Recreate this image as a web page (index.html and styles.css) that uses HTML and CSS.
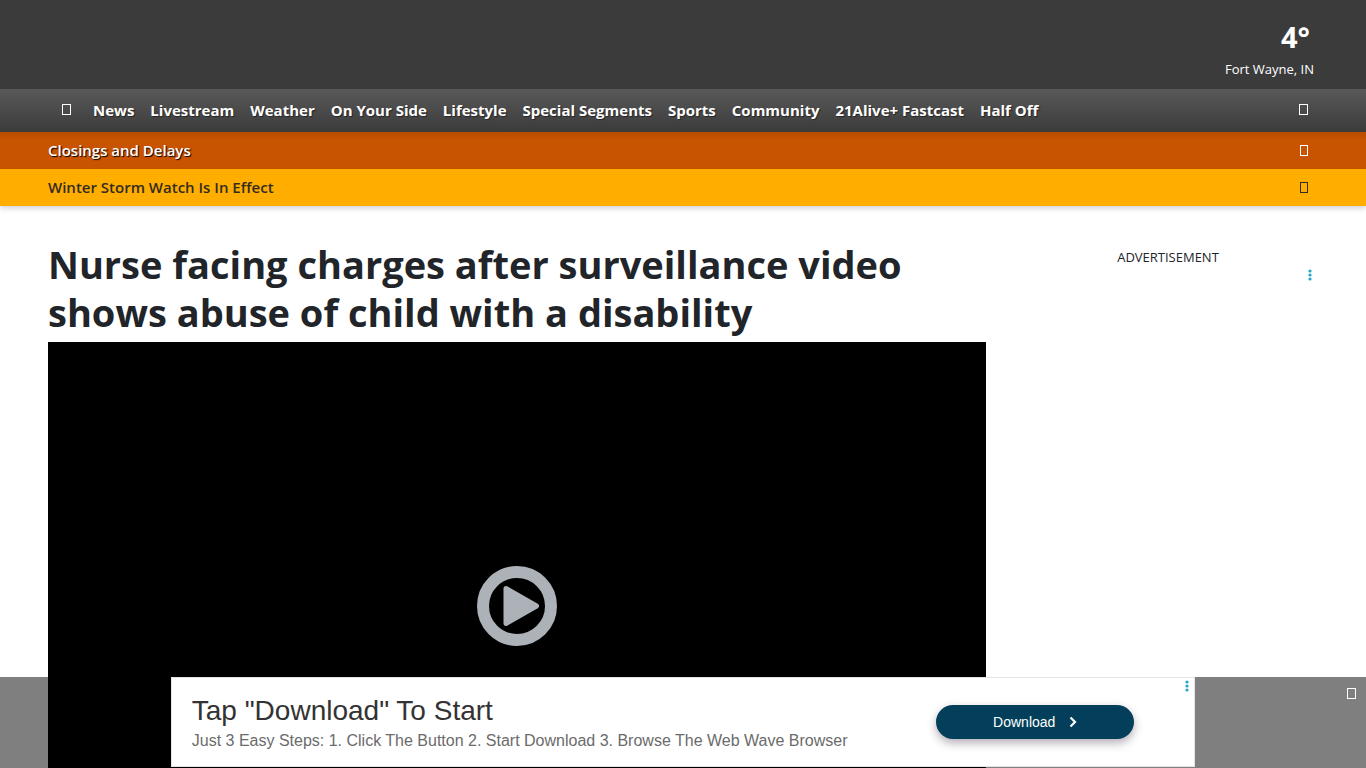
FILE: index.html
```html
<!DOCTYPE html>
<html lang="en">
<head>
<meta charset="utf-8">
<meta name="viewport" content="width=device-width, initial-scale=1">
<title>Nurse facing charges after surveillance video shows abuse of child with a disability</title>
<link rel="stylesheet" href="styles.css">
</head>
<body>
<header class="site-header">
  <div class="masthead">
    <a class="weather" href="#">
      <span class="weather-temp">4°</span>
      <span class="weather-place">Fort Wayne, IN</span>
    </a>
  </div>
  <nav class="nav" aria-label="Main">
    <a class="nav-home" href="#" aria-label="Home"><span class="glyph"></span></a>
    <ul class="nav-list">
      <li><a href="#">News</a></li>
      <li><a href="#">Livestream</a></li>
      <li><a href="#">Weather</a></li>
      <li><a href="#">On Your Side</a></li>
      <li><a href="#">Lifestyle</a></li>
      <li><a href="#">Special Segments</a></li>
      <li><a href="#">Sports</a></li>
      <li><a href="#">Community</a></li>
      <li><a href="#">21Alive+ Fastcast</a></li>
      <li><a href="#">Half Off</a></li>
    </ul>
    <button class="icon-button nav-search" type="button" aria-label="Search"><span class="glyph"></span></button>
  </nav>
  <div class="alerts">
    <a class="alert alert-closings" href="#"><span>Closings and Delays</span><span class="glyph glyph-small"></span></a>
    <a class="alert alert-weather" href="#"><span>Winter Storm Watch Is In Effect</span><span class="glyph glyph-small"></span></a>
  </div>
</header>
<main class="page">
  <article class="story">
    <h1 class="headline">Nurse facing charges after surveillance video shows abuse of child with a disability</h1>
    <div class="video">
      <button class="play" type="button" aria-label="Play video">
        <svg viewBox="0 0 80 80" width="80" height="80" aria-hidden="true">
          <circle cx="40" cy="40" r="34" fill="none" stroke="#adb1b8" stroke-width="12"/>
          <path d="M29 22.500 L59.500 40 L29 57.500 Z" fill="#adb1b8" stroke="#adb1b8" stroke-width="5" stroke-linejoin="round"/>
        </svg>
      </button>
    </div>
  </article>
  <aside class="rail">
    <p class="rail-label">ADVERTISEMENT</p>
    <button class="icon-button ad-menu" type="button" aria-label="Ad options">
      <svg viewBox="0 0 4 12" width="4" height="12" aria-hidden="true"><g fill="#26a5c4"><circle cx="2" cy="2" r="1.600"/><circle cx="2" cy="6" r="1.600"/><circle cx="2" cy="10" r="1.600"/></g></svg>
    </button>
  </aside>
</main>
<aside class="sticky-ad">
  <div class="banner">
    <div class="banner-copy">
      <h2 class="banner-title">Tap "Download" To Start</h2>
      <p class="banner-text">Just 3 Easy Steps: 1. Click The Button 2. Start Download 3. Browse The Web Wave Browser</p>
    </div>
    <button class="download" type="button">Download
      <svg viewBox="0 0 8 12" width="8" height="12" aria-hidden="true"><path d="M1.500 1.500 L6 6 L1.500 10.500" fill="none" stroke="#fff" stroke-width="2.200"/></svg>
    </button>
    <button class="icon-button banner-menu" type="button" aria-label="Ad options">
      <svg viewBox="0 0 4 12" width="4" height="12" aria-hidden="true"><g fill="#26a5c4"><circle cx="2" cy="2" r="1.600"/><circle cx="2" cy="6" r="1.600"/><circle cx="2" cy="10" r="1.600"/></g></svg>
    </button>
  </div>
  <button class="icon-button sticky-close" type="button" aria-label="Close"><span class="glyph"></span></button>
</aside>
</body>
</html>
```
FILE: styles.css
```css
* { box-sizing: border-box; }
body {
  margin: 0;
  background: #fff;
  color: #212529;
  font-family: "Segoe UI", "Open Sans", "Noto Sans", sans-serif;
  font-size: 15px;
  line-height: 24px;
}
a { color: inherit; text-decoration: none; }
button { font: inherit; cursor: pointer; }
h1, h2, p, ul { margin: 0; padding: 0; }

.glyph { display: block; width: 9px; height: 11px; border: 1px solid currentColor; }
.glyph-small { width: 8px; height: 11px; }
.icon-button { display: block; padding: 0; border: 0; background: none; line-height: 0; }

.site-header { box-shadow: 0 2px 6px rgba(0, 0, 0, 0.2); }
.masthead {
  display: flex;
  justify-content: flex-end;
  padding: 18px 52px 8px;
  background: #3b3b3b;
  color: #fff;
}
.weather { display: flex; flex-direction: column; align-items: flex-end; }
.weather-temp { padding: 0 4px 2px 0; font-size: 29px; font-weight: 700; line-height: 37px; }
.weather-place { font-size: 13px; }

.nav {
  display: flex;
  align-items: center;
  padding: 0 58px 2px 62px;
  min-height: 43px;
  background: linear-gradient(#595959, #3b3b3b);
  color: #fff;
  font-weight: 700;
  text-shadow: 1px 1px 1px rgba(0, 0, 0, 0.5);
}
.nav-list { display: flex; gap: 16px; margin-left: 22px; list-style: none; white-space: nowrap; }
.nav-search { margin-left: auto; color: #fff; }

.alert {
  display: flex;
  align-items: center;
  justify-content: space-between;
  padding: 6px 58px 7px 48px;
  font-weight: 600;
}
.alert-closings {
  background: linear-gradient(#b84c00, #c85300 8px);
  color: #fff;
  text-shadow: 1px 1px 1px #000;
}
.alert-weather { background: #ffae00; color: #332b20; }

.page {
  display: grid;
  grid-template-columns: minmax(0, 1fr) 300px;
  gap: 32px;
  padding: 34px 48px 0;
}
.headline { margin-bottom: 6px; font-size: 38px; font-weight: 700; line-height: 48px; }
.video { display: grid; place-items: center; aspect-ratio: 16 / 9; background: #000; }
.play { display: block; padding: 0; border: 0; background: none; line-height: 0; }
.rail-label { padding-top: 5px; font-size: 13px; text-align: center; }
.ad-menu { margin: 0 6px 0 auto; }

.sticky-ad {
  position: fixed;
  right: 0;
  bottom: 0;
  left: 0;
  display: flex;
  justify-content: center;
  padding-bottom: 1px;
  background: rgba(0, 0, 0, 0.5);
}
.banner {
  position: relative;
  display: flex;
  align-items: center;
  justify-content: space-between;
  width: 75%;
  height: 90px;
  padding: 0 60px 0 20px;
  border: 1px solid #e4e4e4;
  background: #fff;
  font-family: Arial, "Liberation Sans", sans-serif;
}
.banner-copy { padding-top: 2px; }
.banner-title { color: #333; font-size: 28px; font-weight: 400; line-height: 36px; }
.banner-text { color: #6b6b6b; font-size: 16px; }
.download {
  display: flex;
  align-items: center;
  justify-content: center;
  gap: 14px;
  width: 198px;
  height: 34px;
  border: 0;
  border-radius: 17px;
  background: #033f5b;
  box-shadow: 0 4px 10px rgba(40, 20, 50, 0.35);
  color: #fff;
  font-size: 14px;
}
.banner-menu { position: absolute; top: 2px; right: 5px; }
.sticky-close { position: absolute; top: 11px; right: 10px; color: #fff; }
```
